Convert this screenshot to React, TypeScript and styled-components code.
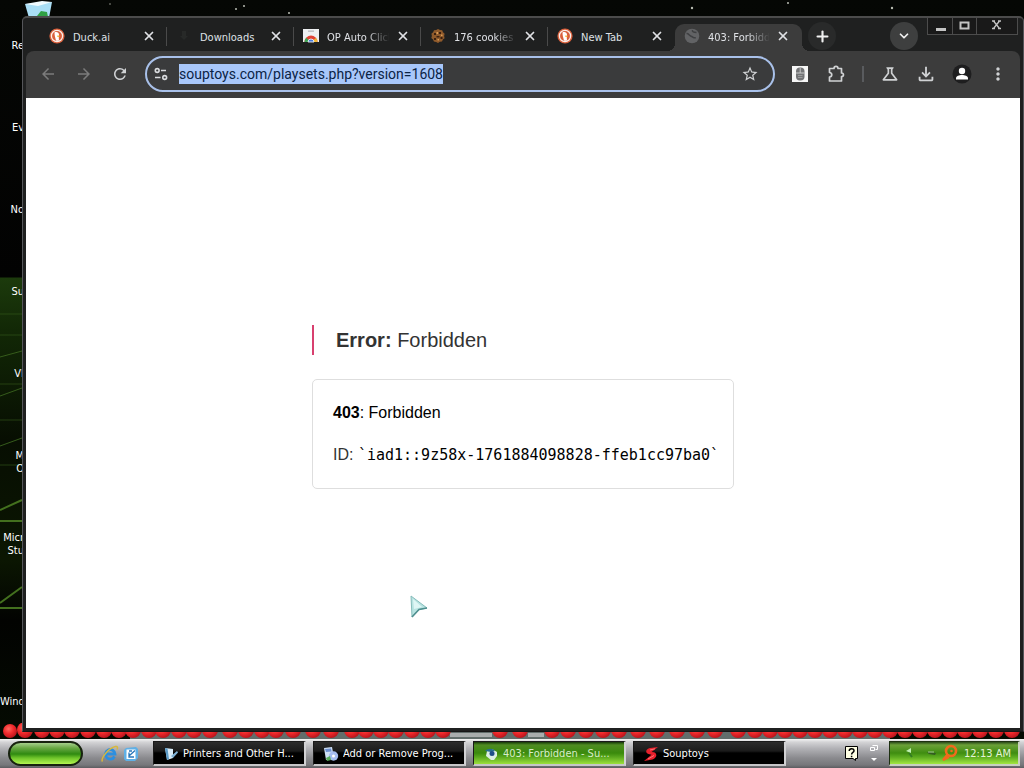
import React from "react";
import styled, { createGlobalStyle, css } from "styled-components";
import {
  MdArrowBack,
  MdArrowForward,
  MdRefresh,
  MdStarBorder,
  MdOutlineScience,
  MdOutlineFileDownload,
  MdMoreVert,
} from "react-icons/md";
import { ChevronDown, Plus, X } from "lucide-react";

const uiFont = '"DejaVu Sans Condensed", "DejaVu Sans", sans-serif';
const pageFont = '"Liberation Sans", Arial, sans-serif';

const GlobalStyle = createGlobalStyle`
  * { box-sizing: border-box; }
  body { margin: 0; background: #000; font-family: ${uiFont}; font-size: 11px; }
  button, input { font: inherit; color: inherit; border: 0; padding: 0; margin: 0; background: none; }
  h1, p { margin: 0; }
  svg { display: block; flex: none; }
`;

/* ---------- desktop ---------- */

const Screen = styled.div`
  height: 100vh;
  min-height: 560px;
  display: grid;
  grid-template-rows: minmax(0, 1fr) 29px;
  overflow: hidden;
`;

const Desktop = styled.div`
  position: relative;
  display: grid;
  grid-template-columns: 22px minmax(0, 1fr);
  padding: 16px 0 7px;
  min-height: 0;
  background: linear-gradient(#050704 0, #020202 277px, #1c3a0c 278px, #122806 330px, #070e02 440px, #0b1602 560px, #020301 620px, #050b02 100%);
`;

const Wallpaper = styled.svg`
  position: absolute;
  inset: 0;
  width: 100%;
  height: 100%;
`;

const Shortcuts = styled.div`
  position: relative;
  display: grid;
  grid-auto-rows: 82px;
  padding-top: 23px;
  overflow: hidden;
  min-height: 0;
`;

const Shortcut = styled.div<{ $row: number }>`
  grid-row: ${(p) => p.$row};
  width: 24px;
  line-height: 13px;
  text-align: right;
  white-space: pre;
  color: #fff;
`;

const shortcuts = [
  { row: 1, label: "Re" },
  { row: 2, label: "Ev" },
  { row: 3, label: "No" },
  { row: 4, label: "Su" },
  { row: 5, label: "VI" },
  { row: 6, label: "M\nO" },
  { row: 7, label: "Micr\nStu" },
  { row: 9, label: "Wind" },
];

const beads = [
  25, 42, 57, 72, 88, 104, 119, 133, 149, 163, 179, 194, 210, 230, 246, 262, 276, 293, 313, 331, 352, 366, 381, 396,
  412, 428, 443, 500, 520, 552, 568, 586, 603, 619, 638, 657, 677, 697, 715, 738, 755, 770, 785, 800, 815, 830, 845,
  860, 875, 890, 905, 920, 935, 950, 965, 980, 996, 1012,
];

const BeadRow = styled.svg`
  position: absolute;
  left: 0;
  bottom: 0;
  width: 100%;
  height: 16px;
`;

/* ---------- browser window ---------- */

const Window = styled.div`
  position: relative;
  display: flex;
  flex-direction: column;
  min-width: 0;
  min-height: 0;
  padding: 0 3px 3px;
  border: 1px solid #55565a;
  border-top: 2px solid #4b4b4b;
  border-bottom-color: #161616;
  border-radius: 5px 5px 0 0;
  background: #1f2020;
`;

const TitleBar = styled.div`
  display: flex;
  height: 33px;
  padding-left: 14px;
  color: #dfe1e5;
`;

const Tab = styled.div<{ $active?: boolean }>`
  position: relative;
  display: flex;
  align-items: center;
  flex: 0 1 127px;
  min-width: 0;
  height: 26px;
  margin-top: 7px;
  padding: 0 13px 4px 9px;
  ${(p) =>
    p.$active
      ? css`
          height: 27px;
          margin-top: 6px;
          padding: 0 14px 3px 9px;
          border-radius: 9px 9px 0 0;
          background: #3c3c3c;
          &::before,
          &::after {
            content: "";
            position: absolute;
            bottom: 0;
            width: 8px;
            height: 8px;
          }
          &::before {
            right: 100%;
            background: radial-gradient(circle at 0 0, transparent 8px, #3c3c3c 8px);
          }
          &::after {
            left: 100%;
            background: radial-gradient(circle at 100% 0, transparent 8px, #3c3c3c 8px);
          }
        `
      : css`
          &:not(:nth-child(5)) {
            background: linear-gradient(#4a4a4a, #4a4a4a) right 2px / 1px 19px no-repeat;
          }
        `}
`;

const TabTitle = styled.span<{ $fade?: boolean }>`
  flex: 1;
  min-width: 0;
  margin: 3px 5px 0 8px;
  line-height: 16px;
  white-space: nowrap;
  overflow: hidden;
  ${(p) => p.$fade && "mask-image: linear-gradient(90deg, #000 62%, transparent 98%);"}
`;

const TabClose = styled.button`
  display: grid;
  place-items: center;
  width: 12px;
  height: 16px;
`;

const RoundButton = styled.button<{ $tone: string }>`
  display: grid;
  place-items: center;
  flex: none;
  width: 28px;
  height: 28px;
  margin-top: 4px;
  border-radius: 50%;
  background: ${(p) => p.$tone};
  color: #f1f1f1;
`;

const NewTab = styled(RoundButton)`
  margin-left: 6px;
`;

const TabSearch = styled(RoundButton)`
  margin-left: auto;
  margin-right: 9px;
`;

const WindowButtons = styled.div`
  display: flex;
  flex: none;
  height: 17px;
  margin-right: 2px;
  border: solid #4c4c4c;
  border-width: 0 1px 1px;
  background: #191919;
`;

const WindowButton = styled.button<{ $wide?: boolean }>`
  display: grid;
  place-items: center;
  width: ${(p) => (p.$wide ? 41 : 24)}px;
  padding-bottom: 2px;
  & + & {
    border-left: 1px solid #4c4c4c;
  }
`;

const Toolbar = styled.div`
  display: flex;
  align-items: center;
  height: 47px;
  padding: 0 4px 1px;
  border-radius: 8px 8px 0 0;
  background: #3c3c3c;
  color: #d0d2d4;
`;

const ToolButton = styled.button<{ $dim?: boolean }>`
  display: grid;
  place-items: center;
  flex: none;
  width: 36px;
  height: 36px;
  color: ${(p) => (p.$dim ? "#7b7b7b" : "inherit")};
`;

const Divider = styled.div`
  flex: none;
  width: 2px;
  height: 16px;
  margin: 0 8px;
  background: #595b5e;
`;

const AddressBar = styled.div`
  display: flex;
  align-items: center;
  flex: 1;
  min-width: 0;
  height: 36px;
  margin: 0 7px;
  padding: 0 14px 0 7px;
  border: 2px solid #a9c1ea;
  border-radius: 18px;
  background: #3a3b3c;
`;

const AddressSlot = styled.div`
  display: flex;
  flex: 1;
  min-width: 0;
  margin: 0 12px 0 11px;
`;

const AddressInput = styled.input`
  field-sizing: content;
  max-width: 100%;
  height: 20px;
  outline: 0;
  background: #a8c7fa;
  color: #0b2345;
  font-family: Roboto, sans-serif;
  font-size: 14px;
  line-height: 20px;
`;

const SmallButton = styled.button`
  display: grid;
  place-items: center;
  flex: none;
  width: 14px;
  height: 20px;
`;

const StarButton = styled(SmallButton)`
  width: 18px;
`;

/* ---------- error page ---------- */

const Page = styled.main`
  position: relative;
  flex: 1;
  min-height: 0;
  display: flex;
  flex-direction: column;
  align-items: center;
  justify-content: center;
  padding-bottom: 12px;
  background: #fff;
  color: #000;
  font-family: ${pageFont};
  font-size: 16px;
  overflow: hidden;
`;

const ErrorBlock = styled.div`
  display: flex;
  flex-direction: column;
  gap: 24px;
  width: 422px;
  max-width: 100%;
`;

const ErrorTitle = styled.h1`
  padding-left: 22px;
  border-left: 2px solid #d8406f;
  color: #333;
  font-size: 20px;
  font-weight: 400;
  line-height: 30px;
`;

const ErrorCard = styled.div`
  display: flex;
  flex-direction: column;
  gap: 18px;
  padding: 21px 0 21px 20px;
  border: 1px solid #dedede;
  border-radius: 5px;
  line-height: 24px;
  white-space: nowrap;
`;

const RequestId = styled.p`
  color: #333;
`;

const Code = styled.code`
  color: #000;
  font-family: "DejaVu Sans Mono", monospace;
  font-size: 15px;
`;

const Pointer = styled.svg`
  position: absolute;
  left: 382px;
  top: 496px;
`;

/* ---------- taskbar ---------- */

const Taskbar = styled.footer`
  position: relative;
  display: flex;
  align-items: center;
  padding: 0 4px 0 8px;
  background: linear-gradient(#f4f4f4 0, #d4d4d6 3px, #b4b4b8 9px, #8a8a8e 19px, #77777b 26px, #5c5c60 29px);
`;

const StartButton = styled.button`
  flex: none;
  width: 75px;
  height: 25px;
  border: 2px solid #17220f;
  border-radius: 13px;
  background: linear-gradient(#a6cf8c 0, #69a844 5px, #2f8a10 11px, #6fc52a 15px, #b4f552 21px);
`;

const QuickLaunch = styled.div`
  display: flex;
  flex: none;
  gap: 6px;
  margin: 0 14px 0 18px;
`;

const QuickButton = styled.button`
  display: grid;
  place-items: center;
  width: 16px;
  height: 18px;
`;

const Tasks = styled.div`
  display: flex;
  flex: 1;
  gap: 7px;
  min-width: 0;
`;

const Task = styled.button<{ $active?: boolean }>`
  display: flex;
  align-items: center;
  gap: 4px;
  flex: 0 1 153px;
  min-width: 0;
  height: 25px;
  padding: 1px 9px 0;
  border: 1px solid #1a1a1a;
  border-right: 2px solid #d2d2d4;
  border-bottom: 2px solid #c6c6c8;
  background: ${(p) =>
    p.$active
      ? "linear-gradient(#16380a 0, #4f8c22 3px, #3a8a0c 11px, #59a71e 15px, #9ce03c 22px)"
      : "linear-gradient(#2c2c2c 0, #1b1b1b 9px, #000 11px, #000 22px)"};
  color: ${(p) => (p.$active ? "#d8ecc8" : "#fff")};
  text-align: left;
`;

const TaskLabel = styled.span`
  flex: 1;
  min-width: 0;
  line-height: 16px;
  white-space: nowrap;
  overflow: hidden;
`;

const LanguageBar = styled.div`
  display: flex;
  flex: none;
  align-items: center;
  gap: 10px;
  margin-right: 10px;
`;

const BarMenu = styled.button`
  display: grid;
  gap: 6px;
  justify-items: center;
`;

const Tray = styled.div`
  display: flex;
  flex: none;
  align-items: center;
  gap: 4px;
  width: 131px;
  height: 25px;
  padding: 0 7px 0 14px;
  border: 1px solid #1d3010;
  border-right: 2px solid #c8d0c0;
  border-bottom: 2px solid #c8d0c0;
  background: linear-gradient(#2a4a1a 0, #6ba038 3px, #3f8d10 11px, #5cab20 15px, #a2e640 22px);
  color: #e6f4d8;
`;

const Clock = styled.time`
  margin-left: auto;
  white-space: nowrap;
`;

/* ---------- drawings ---------- */

const DuckIcon = () => (
  <svg width="16" height="16" viewBox="0 0 16 16">
    <circle cx="8" cy="8" r="7.6" fill="#d9603c" />
    <circle cx="8" cy="8" r="5.6" fill="none" stroke="#fbeee8" strokeWidth="1.3" />
    <path d="M5.600 4.300C7.600 3.400 10 4.200 10 6.700c0 1.600-.4 2.200 0 5.500-1.200.6-2.100.6-3 .3C6.300 9.600 5.200 6.600 5.600 4.300z" fill="#fff" />
    <path d="M8.300 7.500l2.500.3-.4 1-2 .1z" fill="#f4b22b" />
  </svg>
);

const StoreIcon = () => (
  <svg width="16" height="16" viewBox="0 0 16 16">
    <path d="M0 1h16v13H0z" fill="#eef0f2" />
    <path d="M5 2.500h6v1.300H5z" fill="#b5b8bc" />
    <path d="M1.500 14a6.500 6.500 0 0 1 13 0z" fill="#e04437" />
    <path d="M1.500 14a6.500 6.500 0 0 1 1.700-4.200L7 13v1z" fill="#3fa455" />
    <path d="M14.500 14a6.500 6.500 0 0 0-1.500-4L9 13v1z" fill="#f1b632" />
    <path d="M5 14a3 3 0 0 1 6 0z" fill="#4478d8" stroke="#fff" strokeWidth=".8" />
  </svg>
);

const CookieIcon = () => (
  <svg width="16" height="16" viewBox="0 0 16 16">
    <path d="M8 1l2 1 2.200.3.800 2 1.600 1.500-.5 2.200.5 2.200-1.700 1.400-.9 2-2.200.2L8 15l-1.900-1.100-2.200-.3-.9-2L1.300 10l.6-2.100-.5-2.200L3.100 4.300l.900-2 2.200-.2z" fill="#8f5a2b" />
    <path d="M4 5h2v2H4zM9 4h2v2H9zM6.500 8h3v1.500h-3zM4 10h2v2H4zM10.500 9h2v2h-2z" fill="#3a2010" />
    <path d="M6.500 4h1.500v2H6.500zM11 6.500h1.500V8H11zM7.500 11h1.500v1.500H7.500z" fill="#d89b56" />
  </svg>
);

const FaintIcon = () => (
  <svg width="16" height="16" viewBox="0 0 16 16">
    <path d="M6 3h4v5h2l-4 4-4-4h2z" fill="#272928" />
  </svg>
);

const GlobeIcon = () => (
  <svg width="16" height="16" viewBox="0 0 16 16">
    <circle cx="8" cy="8" r="7.300" fill="#626365" />
    <path d="M2.500 5.500C4.500 5 5 7.500 7 8.200s2.500 2 4.800 1.600M8.500 2c-.5 1.800 1.200 2.500 4 2.500" fill="none" stroke="#3f4042" strokeWidth="1.500" />
  </svg>
);

const SiteIcon = () => (
  <svg width="14" height="14" viewBox="0 0 14 14" fill="none" stroke="#d9dbde" strokeWidth="1.600">
    <circle cx="3.200" cy="3.500" r="1.900" />
    <path d="M7 3.500h5M1 10.500h5.500" />
    <circle cx="10.700" cy="10.500" r="1.900" />
  </svg>
);

const MouseIcon = () => (
  <svg width="16" height="16" viewBox="0 0 16 16">
    <path d="M0 0h16v16H0z" fill="#f6f6f6" />
    <rect x="4" y="1.500" width="8.500" height="13" rx="4" fill="#737476" />
    <path d="M4 7h8.500M8.200 2v5" stroke="#c9c9c9" strokeWidth="1" />
    <path d="M6 9.500h4.500M6 11.500h4.500" stroke="#9a9b9c" strokeWidth="1" />
  </svg>
);

const PuzzleIcon = () => (
  <svg width="20" height="20" viewBox="0 0 20 20">
    <path
      d="M3.500 4.500H8C8 1.700 12 1.700 12 4.500h3.500V9c2.600 0 2.600 3.500 0 3.500V17h-12v-4c3-.3 3-4.200 0-4.500z"
      fill="none"
      stroke="currentColor"
      strokeWidth="1.700"
      strokeLinejoin="round"
    />
  </svg>
);

const ProfileIcon = () => (
  <svg width="20" height="20" viewBox="0 0 20 20">
    <circle cx="10" cy="10" r="9.500" fill="#1e1e1f" />
    <circle cx="10" cy="7" r="3.200" fill="#fff" />
    <path d="M4 15.500v-1.300c0-2 3.300-3.200 6-3.200s6 1.200 6 3.200v1.300z" fill="#fff" />
  </svg>
);

const IeIcon = () => (
  <svg width="18" height="18" viewBox="0 0 18 18">
    <path d="M13.500 11.500A4.800 4.800 0 1 1 14 9H5" fill="none" stroke="#2d8fe0" strokeWidth="2.800" />
    <path d="M1.500 16.500C-.5 14 7 3 14.500 1.500c2-.4 2.500 1 1.500 3" fill="none" stroke="#d8b83c" strokeWidth="1.500" />
  </svg>
);

const ShowDesktopIcon = () => (
  <svg width="16" height="16" viewBox="0 0 16 16">
    <path d="M3 2l10-1 2 2v9l-3 3H3l-2-2V4z" fill="#5fb0e6" />
    <path d="M3.500 3.500h9v9.500h-9z" fill="#fff" />
    <path d="M6.500 9.500L12 4.500M6 6.500v4.500h5M6 5h3" fill="none" stroke="#2877ba" strokeWidth="1.300" />
  </svg>
);

const PrinterIcon = () => (
  <svg width="16" height="16" viewBox="0 0 16 16">
    <path d="M2 2l8 1v9l-6 2z" fill="#d8ecf8" />
    <path d="M2 2l2.500.5L6 13l-2 1z" fill="#5a9ac8" />
    <path d="M8 10l6-5 1 1.500L10 12z" fill="#7fb2d6" />
  </svg>
);

const ProgramsIcon = () => (
  <svg width="16" height="16" viewBox="0 0 16 16">
    <path d="M1 2l8-1 2 11-8 2z" fill="#cfe0f6" />
    <path d="M2 3l6-.6.6 3L3 6z" fill="#6c8fd0" />
    <circle cx="10.500" cy="10" r="4.700" fill="#a5bdf0" />
    <circle cx="10.500" cy="10" r="1.500" fill="#fff" />
    <path d="M3 12l4-2 1 4-4 1z" fill="#58ab5a" />
  </svg>
);

const BrowserIcon = () => (
  <svg width="16" height="16" viewBox="0 0 16 16">
    <path d="M4 5l5-2 5 3v4l-3 4H8L3 10z" fill="#dbeee4" />
    <path d="M2 5c3-3 8-3 10 0l-4 1z" fill="#286d90" />
    <circle cx="9" cy="7.500" r="2.500" fill="#1f4e88" />
  </svg>
);

const SouptoysIcon = () => (
  <svg width="16" height="16" viewBox="0 0 16 16">
    <path d="M15 1L7 2C2.500 3 2 7 5.500 8l3 .8L1 15l8.500-1.500C14 12 14.500 7.500 11 6.300L8.500 6z" fill="#e8202c" />
    <path d="M12 2.800L7 4M11 9.500L5 13" stroke="#ff8a8a" strokeWidth=".8" />
  </svg>
);

const HelpIcon = () => (
  <svg width="13" height="15" viewBox="0 0 13 15">
    <path d="M.5.5h12v12h-2v2l-2.500-2H.5z" fill="#ffffe4" stroke="#000" />
    <path d="M4.200 5c0-3 4.800-3 4.800-.3C9 6.500 6.600 6.300 6.600 8.500M6.600 9.700v1.600" fill="none" stroke="#000" strokeWidth="1.500" />
  </svg>
);

const TrayIcons = () => (
  <svg width="56" height="18" viewBox="0 0 56 18">
    <path d="M2 7l5-3v5z" fill="#bff0b2" />
    <path d="M5 9l3 4" stroke="#347d22" strokeWidth="2" />
    <path d="M23 8l9 1-1 2-6-1z" fill="#345c22" />
    <path d="M24 8h6" stroke="#a2c795" />
    <circle cx="47" cy="7" r="5" fill="none" stroke="#f16a1c" strokeWidth="2.600" />
    <path d="M43.500 10.500L39 16l6-3" fill="none" stroke="#f16a1c" strokeWidth="2.400" />
    <circle cx="47.500" cy="7" r="1.300" fill="#f16a1c" />
  </svg>
);

const tabs = [
  { title: "Duck.ai", icon: <DuckIcon /> },
  { title: "Downloads", icon: <FaintIcon /> },
  { title: "OP Auto Click", icon: <StoreIcon />, fade: true },
  { title: "176 cookies", icon: <CookieIcon />, fade: true },
  { title: "New Tab", icon: <DuckIcon /> },
  { title: "403: Forbidd", icon: <GlobeIcon />, fade: true, active: true },
];

const tasks = [
  { label: "Printers and Other H...", icon: <PrinterIcon /> },
  { label: "Add or Remove Prog...", icon: <ProgramsIcon /> },
  { label: "403: Forbidden - Su...", icon: <BrowserIcon />, active: true },
  { label: "Souptoys", icon: <SouptoysIcon /> },
];

export default function App() {
  return (
    <>
      <GlobalStyle />
      <Screen>
        <Desktop>
          <Wallpaper aria-hidden="true">
            <g fill="#b9bdb2">
              <circle cx="236" cy="9" r="1" />
              <circle cx="244" cy="6" r="1" />
              <circle cx="289" cy="13" r="1" />
              <circle cx="692" cy="8" r="1.200" />
              <circle cx="788" cy="3" r="1" />
              <circle cx="892" cy="8" r="1.200" />
              <circle cx="110" cy="4" r=".7" />
            </g>
            <g stroke="#365c1c" strokeWidth="1" fill="none">
              <path d="M0 314h22M0 335h22M0 384h22M0 420h22M0 465h22" opacity=".6" />
              <path d="M0 357l22-6M0 396l22-8M0 446l22-8" />
              <path d="M0 510l22-10M0 521h22M0 603l22-16M0 608h22" stroke="#43701e" strokeWidth="2" />
            </g>
            <path d="M25 4l27-2-3 16H29z" fill="#a9def5" />
            <path d="M25 4l13 2 14-4-10-1z" fill="#f0fbff" />
            <path d="M37 16l4-5 6 1 1 5z" fill="#2fa044" />
          </Wallpaper>
          <BeadRow aria-hidden="true">
            <defs>
              <radialGradient id="bead" cx="0.4" cy="0.35" r="0.7">
                <stop offset="0" stopColor="#ff6a62" />
                <stop offset="0.5" stopColor="#f02a2c" />
                <stop offset="1" stopColor="#b3121a" />
              </radialGradient>
            </defs>
            <rect x="130" y="8" width="760" height="8" fill="#626d6b" />
            <rect x="450" y="10" width="42" height="4" fill="#a9adad" />
            <rect x="528" y="10" width="16" height="4" fill="#a9adad" />
            <circle cx="10" cy="8" r="7" fill="url(#bead)" />
            {beads.map((x) => (
              <circle key={x} cx={x} cy="7" r="8" fill="url(#bead)" />
            ))}
          </BeadRow>

          <Shortcuts>
            {shortcuts.map((s) => (
              <Shortcut key={s.label} $row={s.row}>
                {s.label}
              </Shortcut>
            ))}
          </Shortcuts>

          <Window>
            <TitleBar>
              {tabs.map((t) => (
                <Tab key={t.title} $active={t.active}>
                  {t.icon}
                  <TabTitle $fade={t.fade}>{t.title}</TabTitle>
                  <TabClose aria-label={`Close ${t.title}`}>
                    <X size={14} strokeWidth={3} />
                  </TabClose>
                </Tab>
              ))}
              <NewTab $tone="#292a2a" aria-label="New tab">
                <Plus size={17} strokeWidth={3} />
              </NewTab>
              <TabSearch $tone="#3e3f3f" aria-label="Search tabs">
                <ChevronDown size={14} strokeWidth={3} />
              </TabSearch>
              <WindowButtons>
                <WindowButton aria-label="Minimize">
                  <svg width="11" height="11">
                    <path d="M1 8h10v3H1z" fill="#c4c4c4" />
                  </svg>
                </WindowButton>
                <WindowButton aria-label="Maximize">
                  <svg width="11" height="9">
                    <path d="M1.500 1.500h8v6h-8z" fill="none" stroke="#c4c4c4" strokeWidth="2" />
                  </svg>
                </WindowButton>
                <WindowButton $wide aria-label="Close">
                  <svg width="10" height="10">
                    <path d="M1.500 1l6 7.500M7.500 1l-6 7.500M0 1h3M6 1h3M0 8.500h3M6 8.500h3" stroke="#c4c4c4" strokeWidth="1.300" />
                  </svg>
                </WindowButton>
              </WindowButtons>
            </TitleBar>

            <Toolbar>
              <ToolButton $dim aria-label="Back">
                <MdArrowBack size={18} />
              </ToolButton>
              <ToolButton $dim aria-label="Forward">
                <MdArrowForward size={18} />
              </ToolButton>
              <ToolButton aria-label="Reload">
                <MdRefresh size={18} />
              </ToolButton>
              <AddressBar>
                <SmallButton aria-label="Site information">
                  <SiteIcon />
                </SmallButton>
                <AddressSlot>
                  <AddressInput aria-label="Address" defaultValue="souptoys.com/playsets.php?version=1608" spellCheck={false} />
                </AddressSlot>
                <StarButton aria-label="Bookmark">
                  <MdStarBorder size={18} />
                </StarButton>
              </AddressBar>
              <ToolButton aria-label="Auto clicker">
                <MouseIcon />
              </ToolButton>
              <ToolButton aria-label="Extensions">
                <PuzzleIcon />
              </ToolButton>
              <Divider />
              <ToolButton aria-label="Labs">
                <MdOutlineScience size={20} />
              </ToolButton>
              <ToolButton aria-label="Downloads">
                <MdOutlineFileDownload size={22} />
              </ToolButton>
              <ToolButton aria-label="Profile">
                <ProfileIcon />
              </ToolButton>
              <ToolButton aria-label="Menu">
                <MdMoreVert size={20} />
              </ToolButton>
            </Toolbar>

            <Page>
              <ErrorBlock>
                <ErrorTitle>
                  <b>Error:</b> Forbidden
                </ErrorTitle>
                <ErrorCard>
                  <p>
                    <b>403</b>: Forbidden
                  </p>
                  <RequestId>
                    ID: <Code>`iad1::9z58x-1761884098828-ffeb1cc97ba0`</Code>
                  </RequestId>
                </ErrorCard>
              </ErrorBlock>
              <Pointer width="22" height="26" viewBox="0 0 22 26" aria-hidden="true">
                <path d="M3 2l16 12-8 1.500L4 23z" fill="#b9e4e2" stroke="#86bcbb" strokeWidth="1" />
                <path d="M4 23l7-7.500 8-1.500" fill="none" stroke="#4f8f8f" strokeWidth="1.600" />
                <path d="M5 5l9 8-8 2z" fill="#dff6f5" />
              </Pointer>
            </Page>
          </Window>
        </Desktop>

        <Taskbar>
          <StartButton aria-label="Start" />
          <QuickLaunch>
            <QuickButton aria-label="Internet Explorer">
              <IeIcon />
            </QuickButton>
            <QuickButton aria-label="Show desktop">
              <ShowDesktopIcon />
            </QuickButton>
          </QuickLaunch>
          <Tasks>
            {tasks.map((t) => (
              <Task key={t.label} $active={t.active}>
                {t.icon}
                <TaskLabel>{t.label}</TaskLabel>
              </Task>
            ))}
          </Tasks>
          <LanguageBar>
            <QuickButton aria-label="Help">
              <HelpIcon />
            </QuickButton>
            <BarMenu aria-label="Language bar options">
              <svg width="10" height="7">
                <path d="M3.500.5h5v4h-2M1.500 2.500h4v3h-4z" fill="none" stroke="#fff" />
              </svg>
              <svg width="6" height="4">
                <path d="M0 0h6L3 3z" fill="#fff" />
              </svg>
            </BarMenu>
          </LanguageBar>
          <Tray>
            <TrayIcons />
            <Clock>12:13 AM</Clock>
          </Tray>
        </Taskbar>
      </Screen>
    </>
  );
}
